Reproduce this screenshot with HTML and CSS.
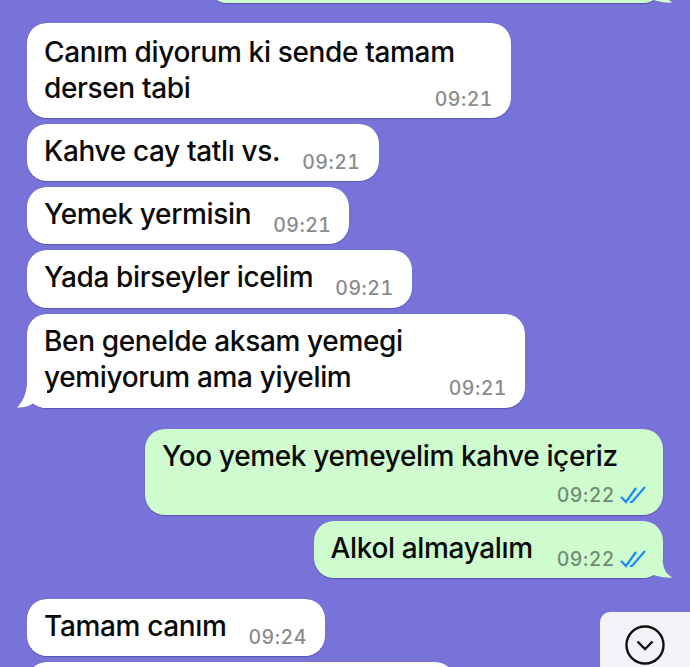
FILE: index.html
```html
<!DOCTYPE html>
<html lang="tr">
<head>
  <meta charset="UTF-8" />
  <title>Sohbet</title>
  <link rel="stylesheet" href="styles.css">
</head>
<body>
  <div class="chat">
    <div class="bubble out cut">
      <svg class="tail tail-out" width="30" height="16" viewBox="0 0 30 16"><path d="M20 0 C20 6 23 12 29.5 15.5 C24 16 17 15 10 13 C7 14 4 15.5 0 16 V0 Z"/></svg>
    </div>

    <div class="bubble in w-first gap-top">
      <p class="text">Canım diyorum ki sende tamam<br>dersen tabi</p>
      <span class="time">09:21</span>
    </div>
    <div class="bubble in">
      <p class="text">Kahve cay tatlı vs.</p>
      <span class="time">09:21</span>
    </div>
    <div class="bubble in">
      <p class="text">Yemek yermisin</p>
      <span class="time">09:21</span>
    </div>
    <div class="bubble in">
      <p class="text">Yada birseyler icelim</p>
      <span class="time">09:21</span>
    </div>
    <div class="bubble in w-fifth">
      <p class="text">Ben genelde aksam yemegi<br>yemiyorum ama yiyelim</p>
      <span class="time">09:21</span>
      <svg class="tail tail-in" width="30" height="26" viewBox="0 0 30 26"><path d="M10 0 C10 10 6 20 0 25.5 C6 26 11 24.5 16 21.5 C19 24 24 26 30 26 V0 Z"/></svg>
    </div>

    <div class="bubble out stacked w-out new-group">
      <p class="text">Yoo yemek yemeyelim kahve içeriz</p>
      <div class="meta">
        <span class="time">09:22</span>
        <svg class="ticks" width="26" height="18" viewBox="0 0 26 18"><path d="M1 11 L6 16 L16 2 M10 16 L12 16 L25 1"/></svg>
      </div>
    </div>
    <div class="bubble out">
      <p class="text">Alkol almayalım</p>
      <div class="meta">
        <span class="time">09:22</span>
        <svg class="ticks" width="26" height="18" viewBox="0 0 26 18"><path d="M1 11 L6 16 L16 2 M10 16 L12 16 L25 1"/></svg>
      </div>
      <svg class="tail tail-out" width="30" height="16" viewBox="0 0 30 16"><path d="M20 0 C20 6 23 12 29.5 15.5 C24 16 17 15 10 13 C7 14 4 15.5 0 16 V0 Z"/></svg>
    </div>

    <div class="bubble in new-group">
      <p class="text">Tamam canım</p>
      <span class="time">09:24</span>
    </div>
    <div class="bubble in w-last"></div>
  </div>

  <div class="scroll-btn">
    <svg width="40" height="40" viewBox="0 0 40 40"><circle cx="20" cy="20" r="18.5"/><path d="M12.5 16.5 L20 24 L27.5 16.5"/></svg>
  </div>
</body>
</html>
```

FILE: styles.css
```css
html, body {
  margin: 0;
  height: 667px;
  overflow: hidden;
}
body {
  position: relative;
  background: #7873d9;
  font-family: Inter, "Noto Sans", sans-serif;
}
.chat {
  display: flex;
  flex-direction: column;
  gap: 6px;
  height: 667px;
  padding: 0 27px;
  box-sizing: border-box;
}
.bubble {
  position: relative;
  flex: none;
  display: flex;
  justify-content: space-between;
  align-items: flex-end;
  gap: 22px;
  box-sizing: border-box;
  padding: 9px 18px 12.2px 17px;
  border-radius: 20px;
  box-shadow: 0 1px 1px rgba(50, 45, 120, 0.45);
}
.in {
  align-self: flex-start;
  background: #fff;
}
.out {
  align-self: flex-end;
  gap: 24px;
  padding-right: 17px;
  background: #cffccf;
}
.text {
  flex: 0 1 auto;
  min-width: 0;
  margin: 0;
  font-size: 28px;
  font-weight: 500;
  line-height: 36px;
  letter-spacing: -0.35px;
  white-space: nowrap;
  color: #0a0a0a;
}
.time {
  flex: none;
  font-size: 19.5px;
  font-weight: 500;
  font-variant-numeric: tabular-nums;
  line-height: 22px;
  letter-spacing: 0.5px;
  margin-bottom: -4px;
  color: #8b8b8b;
}
.out .time {
  color: #6f8c72;
}
.meta {
  flex: none;
  display: flex;
  align-items: flex-end;
  gap: 5px;
}
.ticks {
  margin-bottom: -2px;
  fill: none;
  stroke: #1b8cf0;
  stroke-width: 2.2;
}
.tail {
  position: absolute;
}
.tail-out {
  right: -10px;
  bottom: 0;
  fill: #cffccf;
}
.tail-in {
  left: -10px;
  bottom: 0;
  fill: #fff;
}
.cut {
  width: 456px;
  height: 60px;
  margin-top: -57px;
}
.gap-top {
  margin-top: 14px;
}
.w-first {
  width: 484px;
  height: 95px;
  gap: 0;
}
.w-fifth {
  width: 498px;
  height: 94px;
  gap: 0;
}
.new-group {
  margin-top: 15px;
}
.stacked {
  flex-direction: column;
  gap: 7px;
}
.stacked .text {
  align-self: flex-start;
}
.stacked .meta {
  align-self: flex-end;
}
.w-out {
  width: 518px;
  height: 86px;
}
.w-last {
  width: 428px;
  height: 60px;
}
.scroll-btn {
  position: absolute;
  left: 600px;
  top: 612px;
  width: 90px;
  height: 55px;
  display: flex;
  justify-content: center;
  align-items: flex-start;
  padding-top: 13px;
  box-sizing: border-box;
  background: #f3f2f6;
  border-radius: 10px 0 0 0;
}
.scroll-btn svg {
  fill: none;
  stroke: #111;
  stroke-width: 2.4;
}
```
